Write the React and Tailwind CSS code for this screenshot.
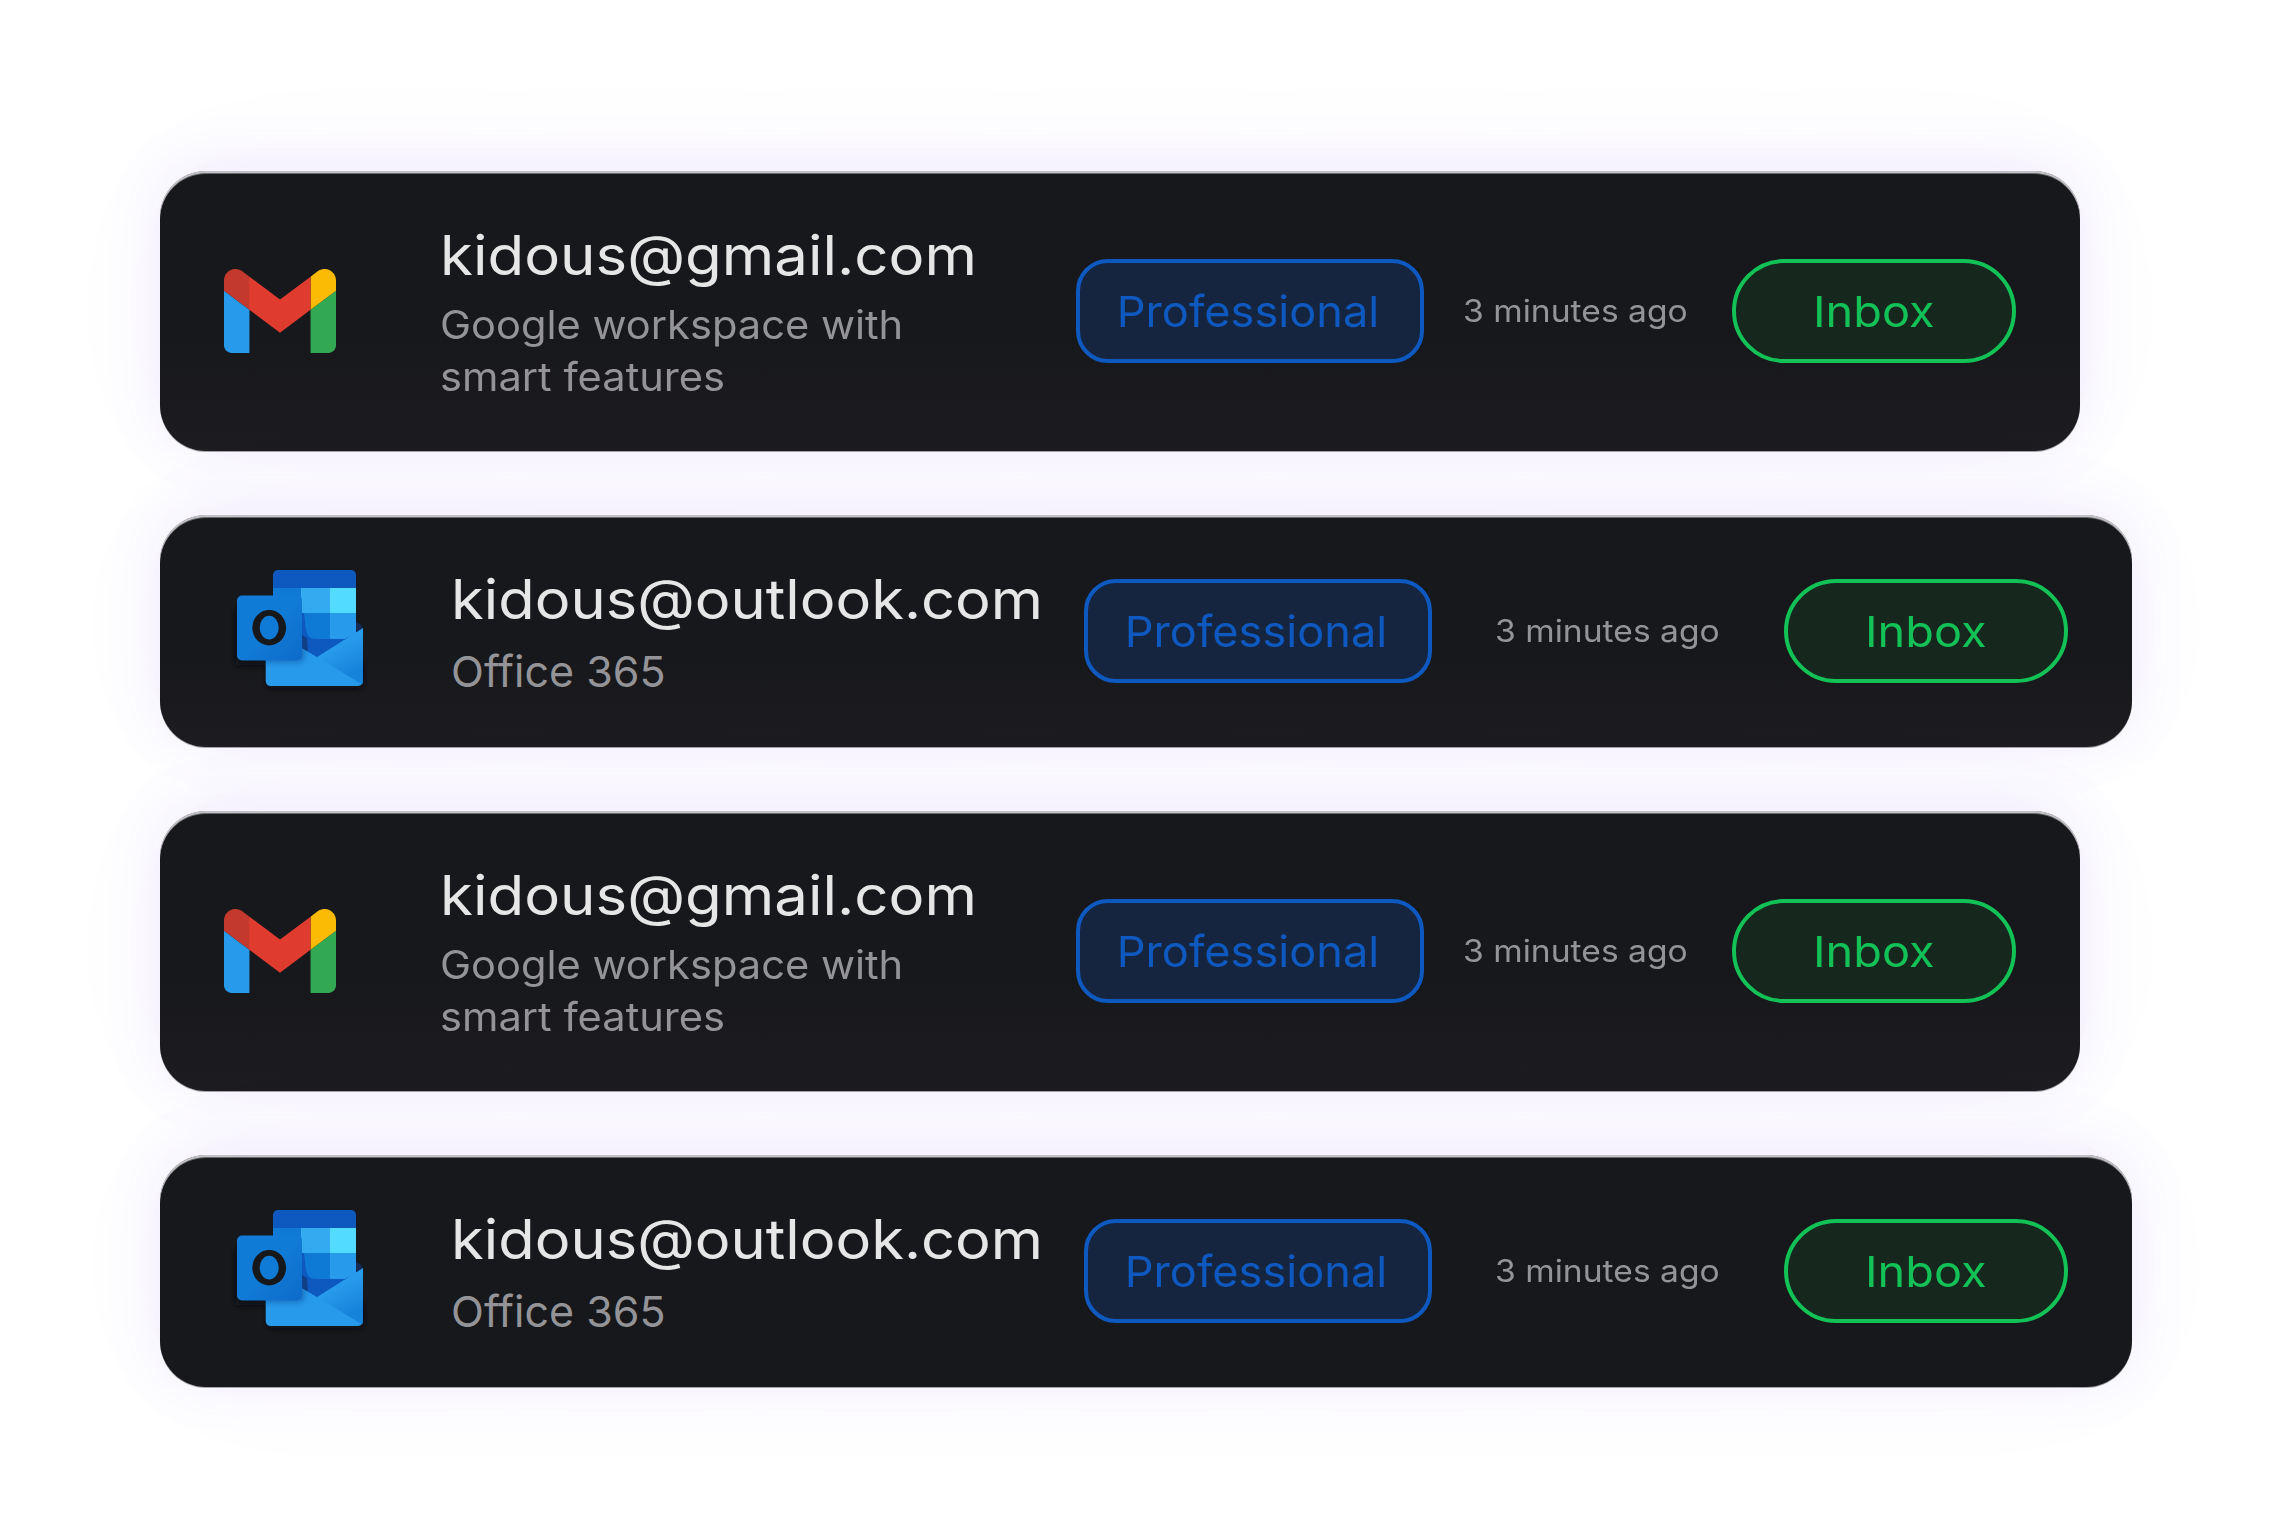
import React from 'react';
import clsx from 'clsx';

const GmailIcon = () => (
  <svg viewBox="52 42 88 66" className="w-28 h-21">
    <path fill="#289aec" d="M58 108h14V74L52 59v43c0 3.32 2.69 6 6 6" />
    <path fill="#32a852" d="M120 108h14c3.32 0 6-2.69 6-6V59l-20 15" />
    <path fill="#fbbb05" d="M120 48v26l20-15v-8c0-7.42-8.47-11.65-14.4-7.2" />
    <path fill="#c4392e" d="M52 51v8l20 15V48l-5.6-4.2c-5.94-4.45-14.4-.22-14.4 7.2" />
    <path fill="#e03b2f" d="M71.7 74V47.8l.3.2 24 18 24-18v26L96 92 71.7 73.8" />
  </svg>
);

const OutlookIcon = () => (
  <svg viewBox="27 21 126 116" className="w-[126px] h-[116px] overflow-visible">
    <defs>
      <linearGradient id="flap" gradientUnits="userSpaceOnUse" x1="124" y1="96" x2="140" y2="126">
        <stop offset="0.1" stopColor="#289aec" />
        <stop offset="1" stopColor="#1683da" />
      </linearGradient>
      <linearGradient id="tile" x1="0" y1="0" x2="1" y2="1">
        <stop offset="0.5" stopColor="#107bd6" />
        <stop offset="1" stopColor="#0e6bca" />
      </linearGradient>
      <clipPath id="body">
        <path d="M55.7 90H91l16 18 46-29v53a5 5 0 0 1-5 5H61a5 5 0 0 1-5.3-5z" />
      </clipPath>
      <filter id="soft" x="-30%" y="-30%" width="160%" height="160%">
        <feGaussianBlur stdDeviation="3" />
      </filter>
    </defs>
    <rect x="58" y="112" width="95" height="27" rx="5" fill="#101114" filter="url(#soft)" />
    <path fill="#101114" filter="url(#soft)" d="M26 60h60v56H26z" />
    {/* calendar sheet */}
    <path fill="#142a55" d="M145 73l5 2q3 2 3 5l-8 6z" />
    <path fill="#0e59c0" d="M63 26a5 5 0 0 1 5-5h73a5 5 0 0 1 5 5v13H63z" />
    <path fill="#0e59c0" d="M91 64h55v20l-39 26-16-10z" />
    <rect x="63" y="39" width="29" height="62" fill="#0f7ad6" />
    <rect x="91" y="39" width="29" height="25" fill="#34aaf0" />
    <rect x="120" y="39" width="26" height="25" fill="#52dbff" />
    <path fill="#0f7ad6" d="M94 64h26v26h-15q-7 0-9-9z" />
    <path fill="#289aec" d="M120 64h26v20l-11 6h-15z" />
    <path fill="#123f86" d="M92 86l5 3 1 14-6-4z" />
    {/* envelope */}
    <g clipPath="url(#body)">
      <path fill="#289aec" d="M55 99h36.5l15.5 9 46-29v58H55z" />
      <path fill="url(#flap)" d="M107 108l46-29v57z" />
      <path fill="#0b4a94" opacity="0.6" filter="url(#soft)" d="M50 95h41q3 0 3 4v8q0 6-6 6H50z" />
    </g>
    {/* O tile */}
    <rect x="27" y="46.5" width="65" height="65" rx="5" fill="url(#tile)" />
    <ellipse cx="59.2" cy="78.7" rx="16.9" ry="17.7" fill="#17181b" />
    <ellipse cx="59.2" cy="78.7" rx="9.5" ry="11.9" fill="#107bd6" />
  </svg>
);

const accounts = [
  { id: 1, provider: 'gmail', email: 'kidous@gmail.com', description: 'Google workspace with smart features' },
  { id: 2, provider: 'outlook', email: 'kidous@outlook.com', description: 'Office 365' },
  { id: 3, provider: 'gmail', email: 'kidous@gmail.com', description: 'Google workspace with smart features' },
  { id: 4, provider: 'outlook', email: 'kidous@outlook.com', description: 'Office 365' },
];

const AccountCard = ({ provider, email, description }) => {
  const isGmail = provider === 'gmail';

  return (
    <div
      className={clsx(
        'flex items-center px-16 rounded-[46px] bg-[#17181b] bg-linear-to-b from-[#17181b] from-60% to-[#1d1c20] last:bg-none shadow-[0_-6px_56px_rgba(139,92,246,0.12),0_-6px_160px_rgba(139,92,246,0.025),0_1px_0_rgba(40,40,44,0.4),inset_0_2px_0_rgba(212,210,214,0.85),inset_0_3px_0_rgba(255,255,255,0.35)]',
        isGmail ? 'w-[1920px] h-[280px]' : 'w-[1972px] h-[232px]'
      )}
    >
      {/* Provider logo */}
      <div className={clsx('shrink-0', isGmail ? 'w-[216px]' : 'w-[227px] pl-[13px] pb-1.5')}>
        {isGmail ? <GmailIcon /> : <OutlookIcon />}
      </div>

      {/* Address */}
      <div className={clsx('shrink-0', isGmail ? 'w-[636px] pt-px' : 'w-[633px] pt-0.5')}>
        <div
          className={clsx(
            'mb-2.5 text-[55px] leading-[68px] text-[#e6e6e6] whitespace-nowrap origin-left',
            isGmail ? 'scale-x-[1.09]' : 'scale-x-[1.084]'
          )}
        >
          {email}
        </div>
        <div
          className={clsx(
            'text-[#949498] origin-left',
            isGmail ? 'w-[480px] text-[39px] leading-[52px] scale-x-[1.067]' : 'text-[43px] leading-[56px]'
          )}
        >
          {description}
        </div>
      </div>

      {/* Category */}
      <div className="shrink-0 w-[348px] h-26 flex items-center justify-center rounded-[32px] border-4 border-[#0e59c0] bg-[#152540] text-[#0e59c0] text-[43px]">
        <span className="mr-[3px] scale-x-[1.05]">Professional</span>
      </div>

      <div
        className={clsx(
          'shrink-0 text-[31px] text-[#949498] whitespace-nowrap origin-left scale-x-[1.085]',
          isGmail ? 'ml-[39px]' : 'ml-[63px]'
        )}
      >
        3 minutes ago
      </div>

      {/* Folder */}
      <div className="ml-auto shrink-0 w-[284px] h-26 flex items-center justify-center rounded-full border-4 border-[#12c257] bg-[#16271d] text-[#12c257] text-[43px]">
        <span className="scale-x-[1.09]">Inbox</span>
      </div>
    </div>
  );
};

export default function App() {
  return (
    <div className="w-[2292px] h-[1537px] overflow-hidden bg-white pt-[171px] pl-40 flex flex-col gap-16 font-['Inter',sans-serif]">
      {accounts.map((account) => (
        <AccountCard key={account.id} {...account} />
      ))}
    </div>
  );
}
